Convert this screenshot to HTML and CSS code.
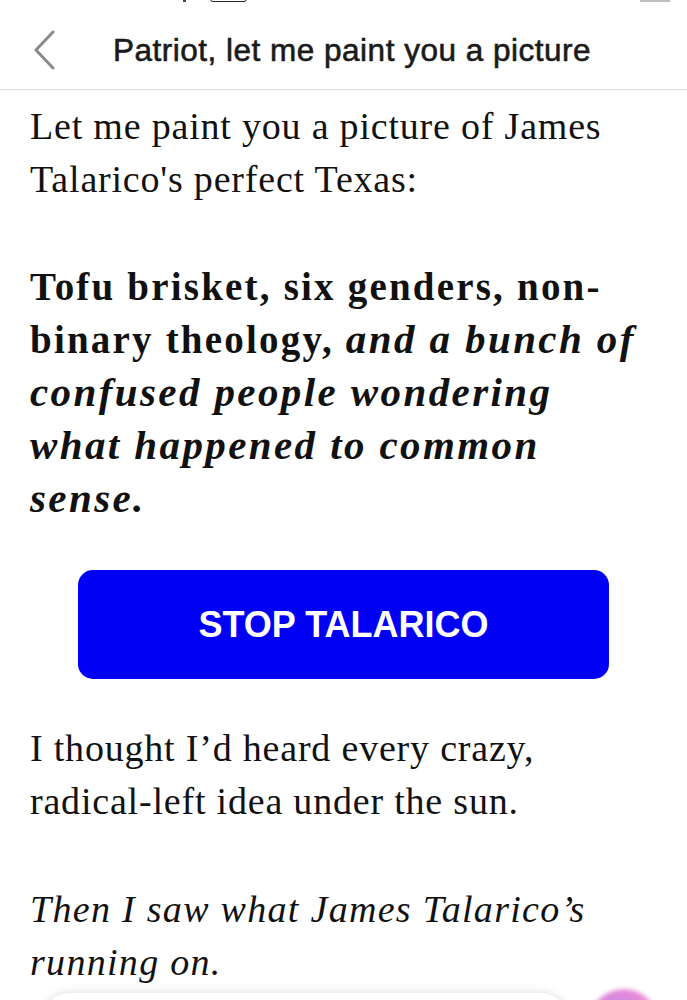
FILE: index.html
```html
<!DOCTYPE html>
<html lang="en">
<head>
<meta charset="utf-8">
<title>Patriot, let me paint you a picture</title>
<link rel="stylesheet" href="styles.css">
</head>
<body>
<div class="status">
  <span class="status-dot"></span>
  <span class="status-pill"></span>
  <span class="status-right"></span>
</div>
<header class="topbar">
  <svg class="back" width="24" height="40" viewBox="0 0 24 40" aria-hidden="true">
    <polyline points="20,2 3,20 20,38" fill="none" stroke="#8a8a8a" stroke-width="3" stroke-linecap="round" stroke-linejoin="round"/>
  </svg>
  <h1 class="title">Patriot, let me paint you a picture</h1>
</header>
<main class="article">
  <p class="para">Let me paint you a picture of James Talarico's perfect Texas:</p>
  <p class="para strong">Tofu brisket, six genders, non-binary theology, <em>and a bunch of confused people wondering what happened to common sense.</em></p>
  <div class="cta-wrap"><a class="cta" href="#">STOP TALARICO</a></div>
  <p class="para">I thought I’d heard every crazy, radical-left idea under the sun.</p>
  <p class="para"><em>Then I saw what James Talarico’s running on.</em></p>
</main>
<div class="dock"></div>
<div class="orb"></div>
</body>
</html>
```
FILE: styles.css
```css
html, body {
  margin: 0;
  padding: 0;
  background: #ffffff;
}
body {
  font-family: "Liberation Serif", "Times New Roman", serif;
  color: #111111;
  overflow: hidden;
  height: 1000px;
  position: relative;
}
.status {
  height: 3px;
  position: relative;
}
.status-dot {
  position: absolute;
  left: 183px;
  top: 0;
  width: 3px;
  height: 2px;
  background: #444;
}
.status-pill {
  position: absolute;
  left: 210px;
  top: -6px;
  width: 37px;
  height: 8px;
  border: 1px solid #222;
  border-radius: 3px;
  box-sizing: border-box;
}
.status-right {
  position: absolute;
  left: 640px;
  top: 0;
  width: 30px;
  height: 2px;
  background: #bdbdbd;
}
.topbar {
  height: 87px;
  border-bottom: 1px solid #dcdcdc;
  display: flex;
  align-items: center;
  padding-left: 33px;
  padding-top: 8px;
  box-sizing: border-box;
}
.back {
  flex: none;
}
.title {
  margin: 0 0 0 56px;
  font-family: "Liberation Sans", Arial, sans-serif;
  font-weight: normal;
  font-size: 31.5px;
  letter-spacing: 0.5px;
  color: #1a1a1a;
  -webkit-text-stroke: 0.6px #1a1a1a;
}
.article {
  padding: 10px 30px 0 30px;
}
.para {
  margin: 0 0 55px 0;
  font-size: 38px;
  line-height: 53px;
  letter-spacing: 0.8px;
}
.para em {
  font-style: italic;
  letter-spacing: 1.3px;
}
.strong {
  font-weight: bold;
  font-size: 39px;
  line-height: 52px;
  letter-spacing: 2.2px;
  margin-bottom: 45px;
  margin-right: 10px;
}
.strong em {
  font-size: 41px;
  line-height: 52px;
  letter-spacing: 2.4px;
}
.cta-wrap {
  display: flex;
  justify-content: center;
  margin-bottom: 43px;
}
.cta {
  display: flex;
  align-items: center;
  justify-content: center;
  width: 531px;
  height: 109px;
  background: #0000f5;
  border-radius: 15px;
  color: #ffffff;
  text-decoration: none;
  font-family: "Liberation Sans", Arial, sans-serif;
  font-weight: bold;
  font-size: 36px;
}
.dock {
  position: absolute;
  left: 40px;
  top: 993px;
  width: 530px;
  height: 60px;
  background: #ffffff;
  border-radius: 30px;
  box-shadow: 0 -1px 8px rgba(0, 0, 0, 0.12);
}
.orb {
  position: absolute;
  left: 588px;
  top: 989px;
  width: 72px;
  height: 72px;
  border-radius: 50%;
  background: radial-gradient(circle at 40% 40%, #b58cf0 0%, #e98ad6 50%, #f7c2e4 75%, rgba(255,255,255,0) 100%);
  filter: blur(2px);
}
```
